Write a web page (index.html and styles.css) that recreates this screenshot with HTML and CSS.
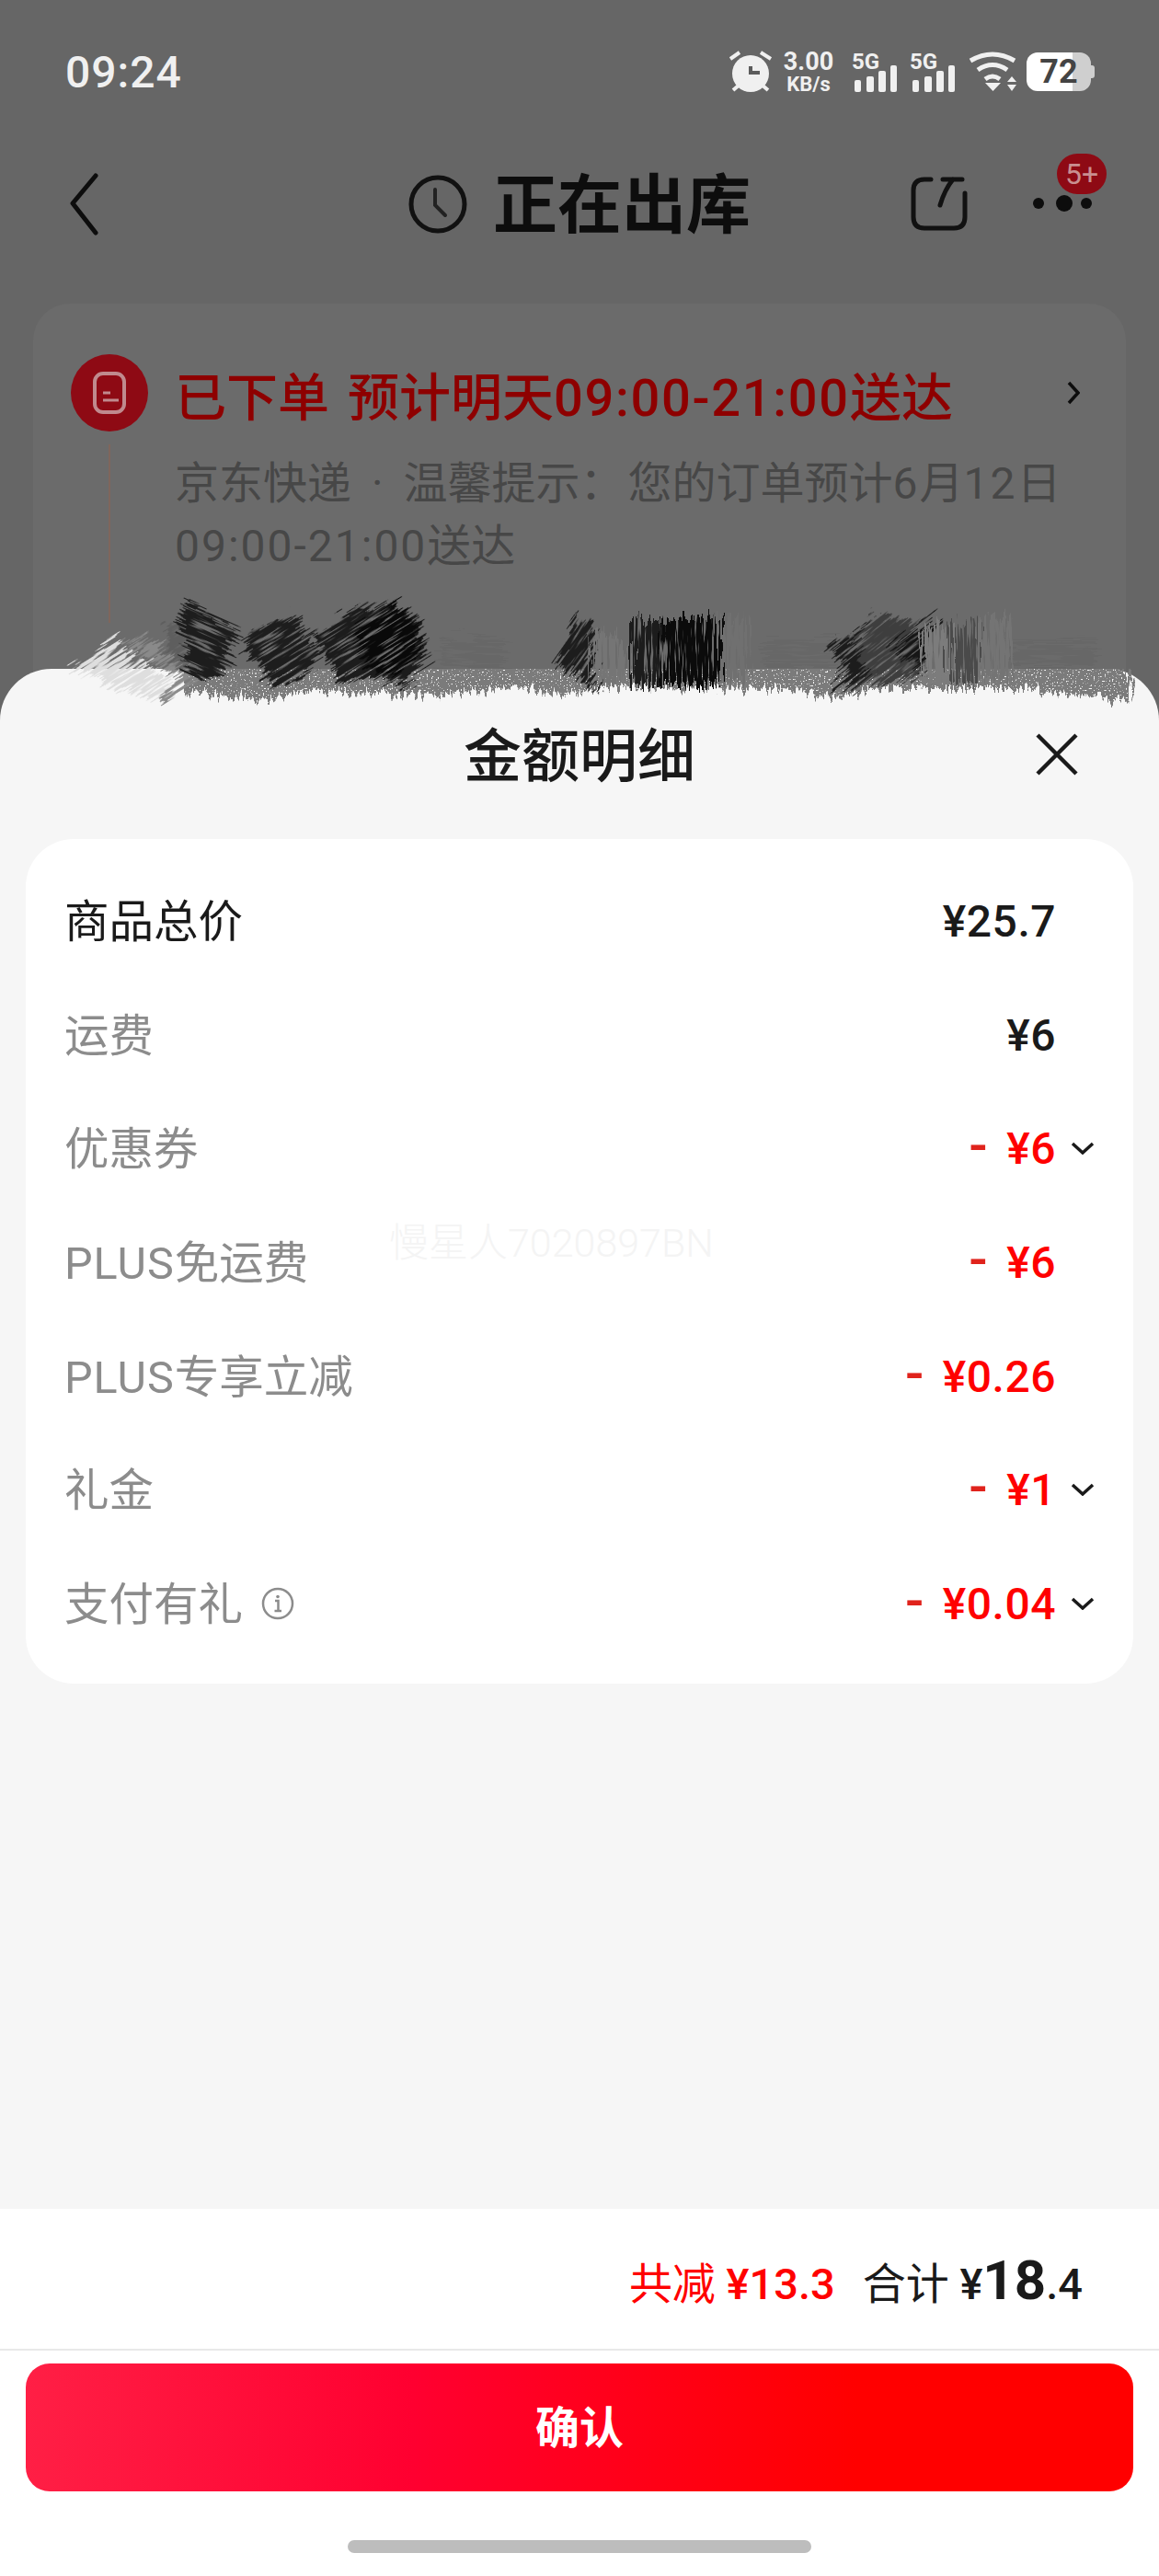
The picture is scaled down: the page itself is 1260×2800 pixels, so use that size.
FILE: index.html
```html
<!DOCTYPE html>
<html lang="zh-CN">
<head>
    <meta charset="UTF-8">
    <meta name="viewport" content="width=device-width, initial-scale=1.0">
    <title>金额明细</title>
    <link rel="stylesheet" href="styles.css">
</head>
<body>
    <div class="screen">
        <div class="status-bar">
            <span class="status-time">09:24</span>
            <div class="status-icons">
                <svg class="icon-alarm" width="48" height="48" viewBox="0 0 48 48">
                    <circle cx="24" cy="26" r="20" fill="#f0f0f0"/>
                    <path d="M2 10 12 3M35 3 46 10M5 44 12 38M43 44 36 38" stroke="#f0f0f0" stroke-width="4" fill="none"/>
                    <path d="M24 18V25H34" stroke="#5c5c5c" stroke-width="4" fill="none"/>
                </svg>
                <div class="net-speed">
                    <span class="speed-num">3.00</span>
                    <span class="speed-unit">KB/s</span>
                </div>
                <svg class="icon-cell" width="50" height="50" viewBox="0 -6 50 50">
                    <text x="0" y="19" class="cell-label">5G</text>
                    <rect x="3" y="31" width="7" height="13" rx="2"/>
                    <rect x="16" y="27" width="8" height="17" rx="2"/>
                    <rect x="29" y="21" width="8" height="23" rx="2"/>
                    <rect x="42" y="15" width="7" height="29" rx="2"/>
                </svg>
                <svg class="icon-cell" width="50" height="50" viewBox="0 -6 50 50">
                    <text x="0" y="19" class="cell-label">5G</text>
                    <rect x="3" y="31" width="7" height="13" rx="2"/>
                    <rect x="16" y="27" width="8" height="17" rx="2"/>
                    <rect x="29" y="21" width="8" height="23" rx="2"/>
                    <rect x="42" y="15" width="7" height="29" rx="2"/>
                </svg>
                <svg class="icon-wifi" width="56" height="46" viewBox="0 0 56 46">
                    <path d="M3 11Q27-3 51 11M11 21Q27 10 43 21M19 31Q27 25 35 31" stroke="#f0f0f0" stroke-width="5" fill="none"/>
                    <path d="M19 35H36L27.500 44ZM43 34 48 28 53 34ZM43 37H53L48 44Z" fill="#f0f0f0"/>
                </svg>
                <div class="battery">
                    <div class="battery-body">72</div>
                    <div class="battery-nub"></div>
                </div>
            </div>
        </div>

        <div class="nav">
            <svg class="nav-back" width="32" height="68" viewBox="0 0 32 68">
                <path d="M28 3 3 33 28 65" stroke="#0d0d0d" stroke-width="5" fill="none" stroke-linecap="round" stroke-linejoin="round"/>
            </svg>
            <div class="nav-title">
                <svg width="64" height="64" viewBox="0 0 64 64">
                    <circle cx="32" cy="32" r="29" stroke="#111" stroke-width="5" fill="none"/>
                    <path d="M29 16V33L40 44" stroke="#222" stroke-width="4" fill="none" stroke-linecap="round"/>
                </svg>
                <span>正在出库</span>
            </div>
            <div class="nav-actions">
                <svg width="64" height="64" viewBox="0 0 64 64">
                    <path d="M23 5H16Q4 5 4 17V46Q4 58 16 58H48Q60 58 60 46V20" stroke="#111" stroke-width="5" fill="none" stroke-linecap="round"/>
                    <path d="M33 33Q38 16 47 5M36 5H57" stroke="#111" stroke-width="5" fill="none" stroke-linecap="round"/>
                </svg>
                <div class="more">
                    <svg width="64" height="20" viewBox="0 0 64 20">
                        <circle cx="6" cy="10" r="6" fill="#0d0d0d"/>
                        <circle cx="34" cy="10" r="9" fill="#0d0d0d"/>
                        <circle cx="58" cy="10" r="6" fill="#0d0d0d"/>
                    </svg>
                    <span class="badge">5+</span>
                </div>
            </div>
        </div>

        <div class="order-card">
            <div class="step-rail">
                <svg width="84" height="84" viewBox="0 0 84 84">
                    <circle cx="42" cy="42" r="42" fill="#8e0a14"/>
                    <rect x="26" y="21" width="32" height="42" rx="9" stroke="#c08a8e" stroke-width="4" fill="none"/>
                    <path d="M35 42H43M35 50H52" stroke="#c08a8e" stroke-width="3" fill="none"/>
                </svg>
                <div class="step-line"></div>
            </div>
            <div class="step-body">
                <div class="step-title">
                    <span>已下单<span class="step-eta">预计明天<span class="step-num">09:00-21:00</span>送达</span></span>
                    <svg width="14" height="26" viewBox="0 0 14 26">
                        <path d="M2 2 12 13 2 24" stroke="#0d0d0d" stroke-width="3.500" fill="none"/>
                    </svg>
                </div>
                <p class="step-text">京东快递<span class="step-dot">·</span>温馨提示：<span class="step-after">您的订单预计<span class="text-num">6</span>月<span class="text-num">12</span>日</span><br><span class="text-num">09:00-21:00</span>送达</p>
            </div>
        </div>

        <div class="sheet">
            <div class="sheet-head">
                <h2>金额明细</h2>
                <svg class="sheet-close" width="48" height="48" viewBox="0 0 48 48">
                    <path d="M3 3 45 45M45 3 3 45" stroke="#1a1a1a" stroke-width="4.500" fill="none"/>
                </svg>
            </div>

            <div class="price-card">
                <div class="price-row">
                    <span class="price-label total">商品总价</span>
                    <span class="price-val">¥25.7</span>
                    <span class="price-more"></span>
                </div>
                <div class="price-row">
                    <span class="price-label">运费</span>
                    <span class="price-val">¥6</span>
                    <span class="price-more"></span>
                </div>
                <div class="price-row">
                    <span class="price-label">优惠券</span>
                    <span class="price-val minus"><i>-</i>¥6</span>
                    <span class="price-more"><svg width="26" height="14" viewBox="0 0 26 14"><path d="M2 2 13 12 24 2" stroke="#1a1a1a" stroke-width="3.500" fill="none"/></svg></span>
                </div>
                <div class="price-row">
                    <span class="price-label"><span><span class="plus">PLUS</span>免运费</span></span>
                    <span class="price-val minus"><i>-</i>¥6</span>
                    <span class="price-more"></span>
                </div>
                <div class="price-row">
                    <span class="price-label"><span><span class="plus">PLUS</span>专享立减</span></span>
                    <span class="price-val minus"><i>-</i>¥0.26</span>
                    <span class="price-more"></span>
                </div>
                <div class="price-row">
                    <span class="price-label">礼金</span>
                    <span class="price-val minus"><i>-</i>¥1</span>
                    <span class="price-more"><svg width="26" height="14" viewBox="0 0 26 14"><path d="M2 2 13 12 24 2" stroke="#1a1a1a" stroke-width="3.500" fill="none"/></svg></span>
                </div>
                <div class="price-row">
                    <span class="price-label">支付有礼
                        <svg class="info-icon" width="36" height="36" viewBox="0 0 36 36">
                            <circle cx="18" cy="18" r="16" stroke="#8c8c8c" stroke-width="2.500" fill="none"/>
                            <circle cx="18" cy="10.500" r="1.800" fill="#8c8c8c"/>
                            <path d="M15 15H18.500V26M14.500 26H22" stroke="#8c8c8c" stroke-width="2.500" fill="none"/>
                        </svg>
                    </span>
                    <span class="price-val minus"><i>-</i>¥0.04</span>
                    <span class="price-more"><svg width="26" height="14" viewBox="0 0 26 14"><path d="M2 2 13 12 24 2" stroke="#1a1a1a" stroke-width="3.500" fill="none"/></svg></span>
                </div>
                <span class="watermark">慢星人7020897BN</span>
            </div>

            <div class="sheet-foot">
                <div class="summary">
                    <span class="saved">共减 <b>¥13.3</b></span>
                    <span class="sum">合计 <b>¥<em>18</em>.4</b></span>
                </div>
                <div class="confirm-wrap">
                    <button class="confirm-btn">确认</button>
                </div>
                <div class="home-bar"></div>
            </div>
        </div>

        <!-- scribble that hides the third line of the order card -->
        <svg class="scribble" width="1260" height="140" viewBox="0 640 1260 140">
            <defs>
                <filter id="hatch" x="-30%" y="-30%" width="160%" height="160%" color-interpolation-filters="sRGB">
                    <feTurbulence type="fractalNoise" baseFrequency="0.025 0.42" numOctaves="2" seed="5" result="n"/>
                    <feDisplacementMap in="SourceGraphic" in2="n" scale="34" xChannelSelector="R" yChannelSelector="G" result="shape"/>
                    <feColorMatrix in="n" type="matrix" values="0 0 0 0 0  0 0 0 0 0  0 0 0 0 0  0 0 0 9 -3" result="holes"/>
                    <feComposite in="shape" in2="holes" operator="in"/>
                </filter>
                <!-- same jagged ends, fewer holes: the band along the sheet is a flat grey -->
                <filter id="torn" x="-5%" y="-30%" width="110%" height="160%" color-interpolation-filters="sRGB">
                    <feTurbulence type="fractalNoise" baseFrequency="0.03 0.3" numOctaves="3" seed="7" result="n"/>
                    <feDisplacementMap in="SourceGraphic" in2="n" scale="26" xChannelSelector="R" yChannelSelector="G" result="shape"/>
                    <feTurbulence type="fractalNoise" baseFrequency="0.6" numOctaves="1" seed="3"/>
                    <feColorMatrix type="matrix" values="0 0 0 0 0  0 0 0 0 0  0 0 0 0 0  0 0 0 12 -3.500" result="holes"/>
                    <feComposite in="shape" in2="holes" operator="in"/>
                </filter>
                <clipPath id="below-top"><rect x="0" y="727" width="1260" height="60"/></clipPath>
            </defs>

            <!-- faint trace of the covered text -->
            <g fill="#5e5e5e" opacity=".3" filter="url(#hatch)">
                <rect x="480" y="692" width="70" height="34"/>
                <rect x="830" y="696" width="80" height="30"/>
                <rect x="1100" y="696" width="90" height="30"/>
            </g>

            <!-- grey band torn along the top of the sheet -->
            <g clip-path="url(#below-top)">
                <g transform="rotate(90 700 740)" filter="url(#torn)">
                    <g transform="rotate(-90 700 740)">
                        <path fill="#7b7b7b" d="M200 715H1205L1232 738 1222 766 1190 757 1150 754 1120 748 960 748 900 759 860 748 650 747 610 755 560 746 470 757 420 754 330 752 290 761 200 752Z"/>
                    </g>
                </g>
            </g>

            <!-- light strokes at the left end -->
            <g transform="rotate(-32 130 725)" filter="url(#hatch)">
                <g transform="rotate(32 130 725)">
                    <path fill="#dedede" d="M76 727 128 692 136 706 188 742 165 758 128 750 100 733Z"/>
                    <path fill="#8a8a8a" d="M135 700 158 692 190 715 218 742 178 763 170 760 195 738Z"/>
                </g>
            </g>
            <g transform="rotate(-30 200 710)" filter="url(#hatch)" opacity=".75">
                <g transform="rotate(30 200 710)">
                    <path fill="#5a5a5a" d="M180 680 205 670 205 730 185 725Z"/>
                </g>
            </g>

            <!-- dark blocks, hatched in the direction they were scratched -->
            <g transform="rotate(24 228 697)" filter="url(#hatch)">
                <g transform="rotate(-24 228 697)">
                    <path fill="#1d1d1d" d="M207 653 260 688 250 703 245 727 227 740 200 727 203 697 192 667Z"/>
                </g>
            </g>
            <g transform="rotate(-32 310 705)" filter="url(#hatch)">
                <g transform="rotate(32 310 705)">
                    <path fill="#1d1d1d" d="M317 667 350 713 327 737 298 748 287 727 263 703 277 683Z"/>
                </g>
            </g>
            <g transform="rotate(-32 400 705)" filter="url(#hatch)">
                <g transform="rotate(32 400 705)">
                    <path fill="#1c1c1c" d="M390 660 427 657 453 673 465 707 443 747 410 737 370 743 360 723 338 690Z"/>
                    <path fill="#090909" d="M395 672 432 660 452 680 458 708 436 735 402 728 385 695Z"/>
                </g>
            </g>
            <g transform="rotate(-55 625 712)" filter="url(#hatch)">
                <g transform="rotate(55 625 712)">
                    <path fill="#1d1d1d" d="M627 670 645 680V730L654 753 602 720 618 690Z"/>
                </g>
            </g>
            <g transform="rotate(90 735 710)" filter="url(#hatch)">
                <g transform="rotate(-90 735 710)">
                    <path fill="#757575" d="M645 680 678 697 680 737 663 750 645 730Z"/>
                    <path fill="#1c1c1c" d="M686 674H720V745H686Z"/>
                    <path fill="#0b0b0b" d="M718 672H784V745H718Z"/>
                    <path fill="#707070" d="M783 672H812L816 735 783 745Z"/>
                </g>
            </g>
            <g transform="rotate(-38 950 710)" filter="url(#hatch)">
                <g transform="rotate(38 950 710)">
                    <path fill="#3e3e3e" d="M953 672 993 672 1000 735 930 745 925 700Z"/>
                    <path fill="#1c1c1c" d="M953 668 899 703 922 727 904 752 948 735 925 695Z"/>
                    <path fill="#161616" d="M1020 667 966 703 1002 727V750L1008 690Z"/>
                </g>
            </g>
            <g transform="rotate(90 1050 710)" filter="url(#hatch)">
                <g transform="rotate(-90 1050 710)">
                    <path fill="#7c7c7c" d="M1002 682 1033 678V745H1002Z"/>
                    <path fill="#4a4a4a" d="M1033 678 1064 674V742H1033Z"/>
                    <path fill="#747474" d="M1064 672 1098 668 1102 738H1064Z"/>
                </g>
            </g>
        </svg>
    </div>
</body>
</html>
```

FILE: styles.css
```css
* {
    box-sizing: border-box;
}

body {
    margin: 0;
    font-family: Roboto, "Noto Sans CJK SC", sans-serif;
    color: #1a1a1a;
}

.screen {
    position: relative;
    width: 1260px;
    height: 2800px;
    overflow: hidden;
    background-color: #666;
}

/* Status bar */
.status-bar {
    display: flex;
    justify-content: space-between;
    align-items: center;
    height: 156px;
    padding: 0 70px 0 71px;
    color: #f0f0f0;
}

.status-time {
    font-size: 48px;
    font-weight: 500;
    letter-spacing: 1px;
}

.status-icons {
    display: flex;
    align-items: center;
    height: 46px;
}

.icon-alarm {
    margin-right: 12px;
}

.net-speed {
    display: flex;
    flex-direction: column;
    align-items: center;
    width: 54px;
    margin-right: 20px;
    font-weight: 700;
    line-height: 1;
}

.speed-num {
    font-size: 27px;
    height: 27px;
}

.speed-unit {
    font-size: 22px;
}

.icon-cell {
    margin-right: 13px;
    margin-bottom: 6px;
    fill: #f0f0f0;
}

.cell-label {
    font-size: 24px;
    font-weight: 700;
}

.icon-wifi {
    margin-right: 8px;
}

.battery {
    display: flex;
    align-items: center;
}

.battery-body {
    width: 70px;
    height: 42px;
    border-radius: 12px;
    background: linear-gradient(to right, #fff 71%, #cfcfcf 71%);
    color: #444;
    font-size: 36px;
    font-weight: 700;
    line-height: 42px;
    text-align: center;
}

.battery-nub {
    width: 4px;
    height: 14px;
    border-radius: 0 3px 3px 0;
    background-color: #cfcfcf;
}

/* Navigation */
.nav {
    display: grid;
    grid-template-columns: 1fr auto 1fr;
    align-items: center;
    height: 132px;
    padding: 0 73px;
}

.nav-back {
    margin-left: 3px;
}

.nav-title {
    display: flex;
    align-items: center;
    gap: 28px;
    color: #0d0d0d;
    font-size: 70px;
    font-weight: 700;
}

.nav-title span {
    padding-bottom: 10px;
}

.nav-actions {
    display: flex;
    justify-content: flex-end;
    align-items: center;
    gap: 70px;
}

.more {
    position: relative;
    width: 64px;
    margin-bottom: 2px;
}

.more svg {
    display: block;
}

.badge {
    position: absolute;
    top: -44px;
    left: 26px;
    width: 54px;
    height: 44px;
    border-radius: 22px;
    background-color: #8e0a14;
    color: #c98f90;
    font-size: 32px;
    line-height: 44px;
    text-align: center;
}

/* Order card behind the sheet */
.order-card {
    display: flex;
    height: 500px;
    margin: 42px 36px 0;
    padding: 55px 0 0 41px;
    border-radius: 40px 40px 0 0;
    background-color: #6b6b6b;
}

.step-rail {
    display: flex;
    flex-direction: column;
    align-items: center;
    width: 84px;
}

.step-line {
    flex: none;
    width: 2px;
    height: 194px;
    margin-top: 14px;
    background-color: #7f665c;
}

.step-body {
    flex: 1;
    margin-left: 29px;
}

.step-title {
    display: flex;
    justify-content: space-between;
    align-items: center;
    height: 84px;
    padding-right: 50px;
    color: #8e0000;
    font-size: 56px;
    font-weight: 500;
    white-space: nowrap;
}

.step-eta {
    margin-left: 20px;
}

.step-num {
    letter-spacing: 1.700px;
}

.step-text {
    margin: 23px 0 0;
    color: #474747;
    font-size: 48px;
    line-height: 68px;
    white-space: nowrap;
}

.text-num {
    letter-spacing: 2px;
}

.step-dot {
    margin: 0 22px;
}

.step-after {
    margin-left: 4px;
}

/* Bottom sheet */
.sheet {
    position: absolute;
    top: 727px;
    left: 0;
    right: 0;
    bottom: 0;
    display: flex;
    flex-direction: column;
    border-radius: 56px 56px 0 0;
    background-color: #f6f6f6;
}

.sheet-head {
    display: flex;
    justify-content: center;
    align-items: center;
    position: relative;
    height: 185px;
}

.sheet-head h2 {
    margin: 0;
    padding-bottom: 6px;
    font-size: 63px;
    font-weight: 500;
}

.sheet-close {
    position: absolute;
    top: 69px;
    right: 87px;
}

.price-card {
    position: relative;
    margin: 0 28px;
    padding: 27px 42px 25px 42px;
    border-radius: 52px;
    background-color: #fff;
}

.price-row {
    display: flex;
    align-items: center;
    height: 123.700px;
}

.price-label {
    display: flex;
    align-items: center;
    gap: 20px;
    flex: 1;
    padding-bottom: 6px;
    color: #8c8c8c;
    font-size: 48.500px;
}

.price-label.total {
    color: #1a1a1a;
}

.plus {
    letter-spacing: 1px;
}

.info-icon {
    margin-top: 6px;
}

.price-val {
    margin-top: 2px;
    font-size: 48px;
    font-weight: 500;
    line-height: 80px;
    letter-spacing: 0.500px;
}

.price-val.minus {
    color: #f00;
}

.price-val i {
    margin-right: 20px;
    color: #e0231c;
    font-size: 60px;
    font-style: normal;
    line-height: 1;
}

.price-more {
    display: flex;
    justify-content: flex-end;
    width: 42px;
}

.watermark {
    position: absolute;
    top: 404px;
    left: 395px;
    color: #f4f4f4;
    font-size: 43px;
    font-weight: 300;
}

.sheet-foot {
    margin-top: auto;
    background-color: #fff;
}

.summary {
    display: flex;
    justify-content: flex-end;
    align-items: baseline;
    gap: 30px;
    height: 154px;
    padding: 42px 83px 0 0;
    border-bottom: 2px solid #e8e8e8;
    font-size: 47px;
}

.summary b {
    font-weight: 500;
}

.summary em {
    font-size: 60px;
    font-style: normal;
    font-weight: 700;
}

.saved {
    color: #f00;
}

.confirm-wrap {
    padding: 14px 28px 0;
}

.confirm-btn {
    display: block;
    width: 100%;
    height: 139px;
    padding: 0 0 8px;
    border: none;
    border-radius: 26px;
    background: linear-gradient(to right, #ff1f45, #ff0030 35%, #ff0000 75%);
    color: #fff;
    font-family: inherit;
    font-size: 48px;
    font-weight: 700;
}

.home-bar {
    width: 504px;
    height: 14px;
    margin: 53px auto 25px;
    border-radius: 7px;
    background-color: #bdbdbd;
}

.scribble {
    position: absolute;
    top: 640px;
    left: 0;
}
```
